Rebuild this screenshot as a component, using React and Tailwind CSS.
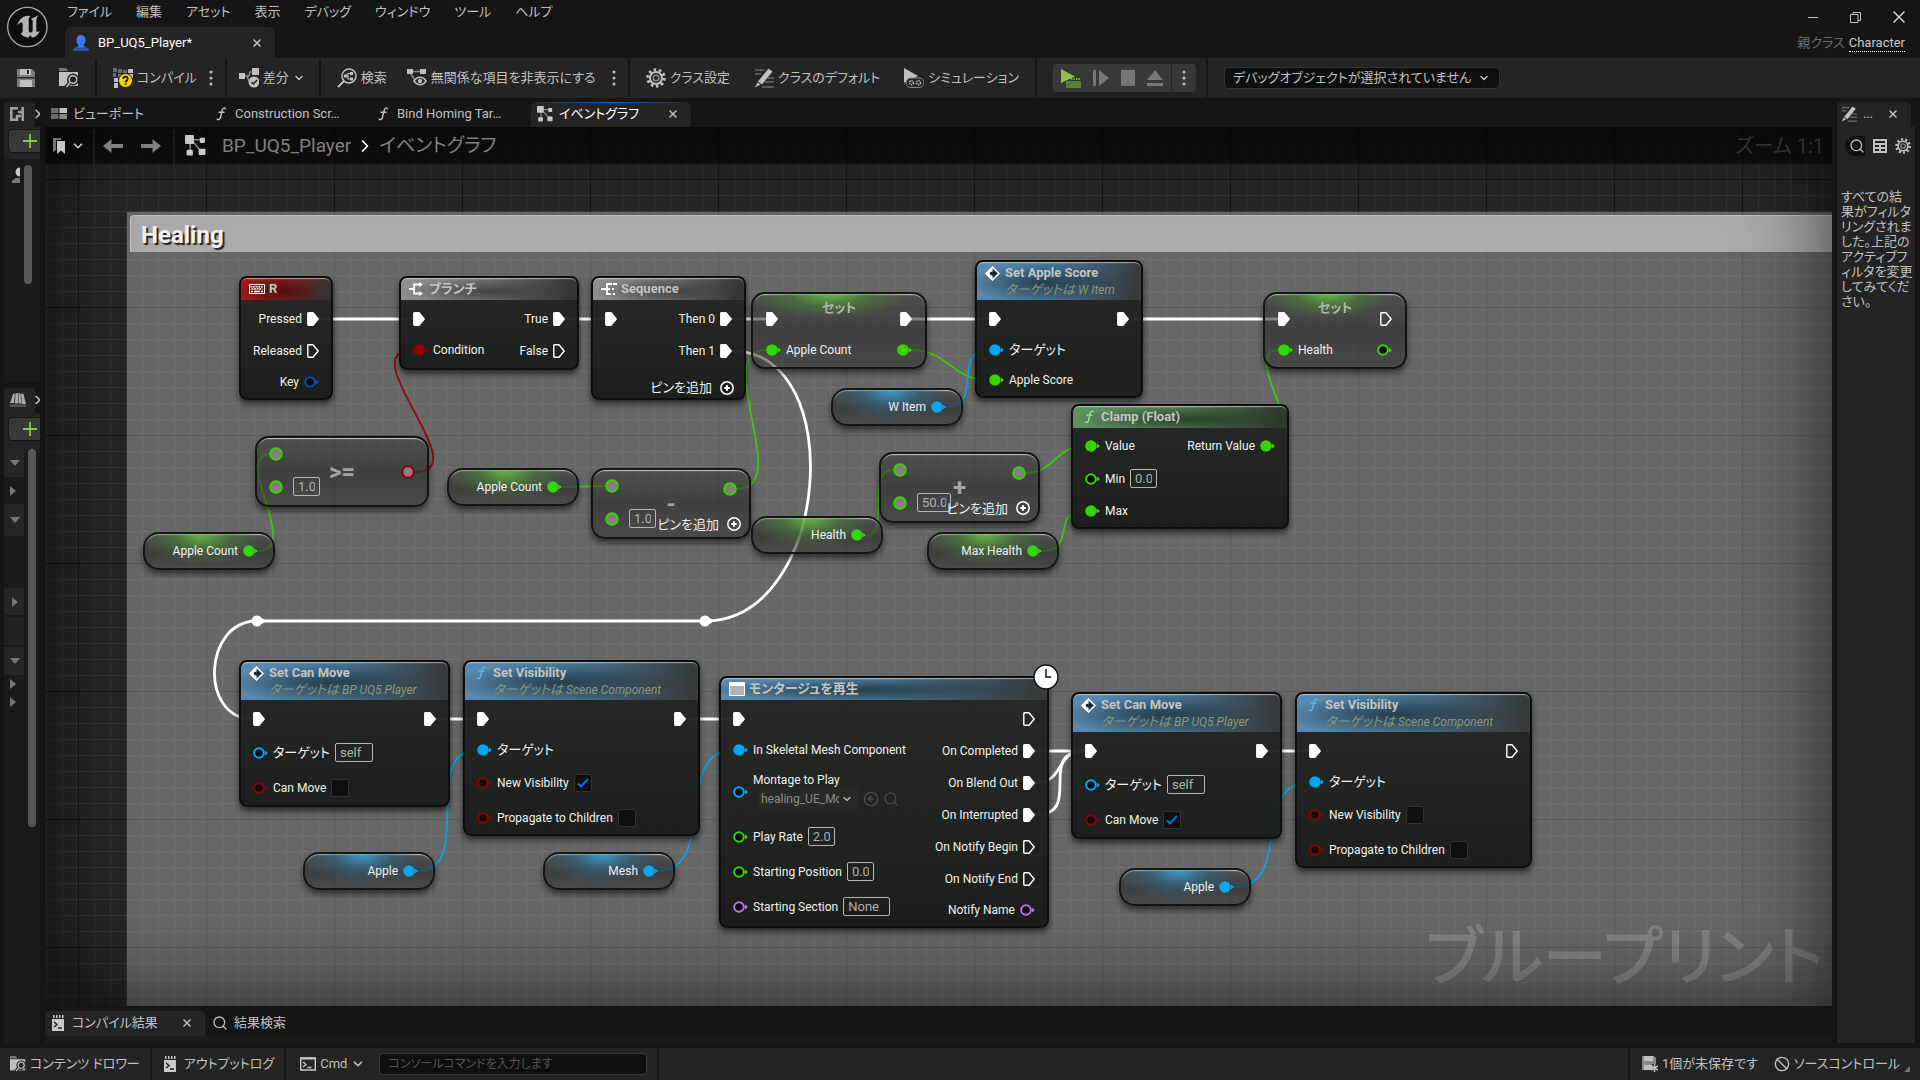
import React from 'react';
import { ChevronDown, ChevronRight, Search, X, CircleArrowLeft, Ban } from 'lucide-react';

const PIN_COLORS = {
  green: '#37d400',
  blue: '#00a8f5',
  red: '#930000',
  key: '#0b4fb3',
  purple: '#b877e8',
};

/* ---------- icons ---------- */

const UnrealLogo = () => (
  <svg className="size-[42px] shrink-0" viewBox="18 17 126 126" fill="none">
    <circle cx="82" cy="80" r="59" fill="#0e0e0e" stroke="#a8a8a8" strokeWidth="4" />
    <path
      fill="#b4b4b4"
      d="M70 50Q80 45 92 47Q86 50 86 58V90Q86 97 92 97Q97 96 98 91V62Q98 57 92 56Q104 52 115 45Q109 52 109 61V91Q110 98 120 91Q113 107 98 112L91 105L84 112Q68 110 62 99Q68 99 68 92V71Q68 66 63 66Q58 67 52 75Q56 57 70 50Z"
    />
  </svg>
);

const PersonIcon = () => (
  <svg className="size-4 shrink-0" viewBox="0 0 16 16">
    <path fill="#2f4f96" d="M0 16v-2l4-3h8l4 3v2z" />
    <path fill="#3d7bff" d="M8 0c3 0 4.500 2 4.500 5 0 2-1 4-2 5v2.500H5.500V10c-1-1-2-3-2-5C3.500 2 5 0 8 0z" />
    <path fill="#2a55b8" d="M5.500 5.500h2v1h-2zM8.500 5.500h2v1h-2zM7 8.500h2v1H7z" />
  </svg>
);

const SaveIcon = () => (
  <svg className="size-[18px]" viewBox="0 0 18 18" fill="#c0c0c0">
    <path fill="#7d7d7d" d="M0 0h15l3 3v15H0z" />
    <path d="M3 0h11v6H3zM3 11h12v7H3z" />
    <path fill="#242424" d="M10 1h2v4h-2zM0 8h18v1.500H0z" />
  </svg>
);

const BrowseIcon = ({ className = 'size-5' }) => (
  <svg className={className} viewBox="0 0 20 20" fill="none">
    <path fill="#777" d="M0 0h7l2 3H0z" />
    <path fill="#c0c0c0" d="M0 4h19v14H0z" />
    <circle cx="14" cy="11.500" r="4.500" fill="#242424" stroke="#242424" strokeWidth="3" />
    <circle cx="14" cy="11.500" r="3.800" stroke="#c0c0c0" strokeWidth="1.500" />
    <path stroke="#242424" strokeWidth="4" d="M11 14.500 7 19" />
    <path stroke="#c0c0c0" strokeWidth="1.500" d="M11.300 14.300 7.500 19" />
  </svg>
);

const CompileIcon = () => (
  <svg className="size-5" viewBox="0 0 20 20">
    <path fill="#6b6b6b" d="M0 0h4v4H0zM5 1h4v4H5zM10 2h4v4h-4zM0 5h3v4H0zM5 6h4v4H5z" />
    <path fill="#c0c0c0" d="M15 1h5v4h-5zM1 10h4v4H1zM1 15h4v5H1zM16 6h4v4h-4z" />
    <circle cx="12.500" cy="12.500" r="7" fill="#ffd500" stroke="#1c1c1c" />
    <path fill="none" stroke="#111" strokeWidth="1.800" d="M10.300 11c0-3 4.500-3 4.500-.2 0 1.700-2.200 1.700-2.200 3.700M12.600 15.500v1.600" />
  </svg>
);

const DiffIcon = () => (
  <svg className="size-5" viewBox="0 0 20 20" fill="#c0c0c0">
    <path d="M0 5h6v6H0zM13 0h7v7h-7z" />
    <path stroke="#888" strokeWidth="1.500" fill="none" d="M6 8h4l1-4h3M8 8l2 5" />
    <circle cx="15" cy="14" r="5.500" />
    <path stroke="#242424" strokeWidth="1.500" fill="none" d="m12.500 14 2 2 3.500-4" />
  </svg>
);

const FindIcon = () => (
  <svg className="size-5" viewBox="0 0 20 20" fill="none" stroke="#c0c0c0" strokeWidth="1.500">
    <circle cx="12" cy="8" r="7" />
    <path strokeWidth="2" d="M7 13 1 19" />
    <path strokeWidth="1.200" d="M8 8h3V5.500h4M11 8v3h4" />
    <path fill="#c0c0c0" stroke="none" d="M7 6.500h3v3H7zM13 4h3v3h-3zM13 9.500h3v3h-3z" />
  </svg>
);

const HideIcon = () => (
  <svg className="size-5" viewBox="0 0 20 20" fill="none" stroke="#c0c0c0">
    <path fill="#c0c0c0" stroke="none" d="M0 1h6v5H0zM13 1h6v5h-6z" />
    <path stroke="#888" strokeWidth="1.500" d="M6 3.500h7M4 6l4 6" />
    <path strokeWidth="1.500" d="M7 13c3.500-5 9-5 12 0-3 5-8.500 5-12 0z" />
    <circle cx="13" cy="13" r="1.800" fill="#c0c0c0" />
  </svg>
);

const GearIcon = ({ className = 'size-5' }) => (
  <svg className={className} viewBox="0 0 20 20" fill="none" stroke="#c0c0c0">
    <circle cx="10" cy="10" r="8.300" strokeWidth="3" strokeDasharray="2.600 2.615" />
    <circle cx="10" cy="10" r="6" strokeWidth="2" />
    <circle cx="10" cy="10" r="2.800" strokeWidth="1.500" stroke="#8a8a8a" />
  </svg>
);

const PencilIcon = ({ className = 'size-5' }) => (
  <svg className={className} viewBox="0 0 20 20" fill="none">
    <path stroke="#6b6b6b" strokeWidth="1.500" d="M1 2h9M1 6h6M14 10h6M11 14h9M8 19h12" />
    <path fill="#c0c0c0" d="m14.500.500 4 3L8 16.500l-4-3zM3.500 14.500l3 2L1 19.500z" />
  </svg>
);

const SimulateIcon = () => (
  <svg className="size-5" viewBox="0 0 20 20" fill="none">
    <path fill="#c0c0c0" d="M0 0 14 8 0 15z" />
    <rect x="2" y="10" width="18" height="9.500" rx="4.700" fill="#242424" stroke="#8a8a8a" />
    <circle cx="7.500" cy="14.700" r="2" stroke="#c0c0c0" strokeWidth="1.500" strokeDasharray="1.300 .8" />
    <circle cx="14.500" cy="14.700" r="2" stroke="#c0c0c0" strokeWidth="1.500" strokeDasharray="1.300 .8" />
  </svg>
);

const PlayIcon = () => (
  <svg className="size-5" viewBox="0 0 20 20">
    <path fill="#8bc34a" d="M0 1 14 8.500 0 15z" />
    <path fill="#5d7d3d" d="M5 13h15v7H5z" />
    <path fill="none" stroke="#8bc34a" strokeWidth="1.500" strokeDasharray="1.500 1" d="M10 11h10" />
  </svg>
);

const GraphIcon = ({ className = 'size-4' }) => (
  <svg className={className} viewBox="0 0 20 20" fill="#c8c8c8">
    <path stroke="#8a8a8a" strokeWidth="1.500" fill="none" d="M8 4.500h6M5 8v7M8 7l7 8" />
    <rect width="8.500" height="8.500" rx="1" />
    <rect x="14" y="2.500" width="5" height="5" rx="1" />
    <rect x="1.500" y="14" width="6" height="5.500" rx="1" />
    <rect x="13" y="13" width="6.500" height="6" rx="1" />
  </svg>
);

const ViewportIcon = () => (
  <svg className="h-[11px] w-4" viewBox="0 0 16 11">
    <path fill="#6b6b6b" d="M0 0h7.500v5H0zM0 6h7.500v5H0z" />
    <path fill="#c0c0c0" d="M8.500 0H16v5H8.500z" />
    <path fill="#8a8a8a" d="M8.500 6H16v5H8.500z" />
  </svg>
);

const FunctionIcon = ({ color = '#c0c0c0' }) => (
  <svg className="h-3.5 w-4" viewBox="0 0 16 14" fill="none" stroke={color} strokeWidth="1.400" strokeLinecap="round">
    <path d="M12.500 1.600C11 .4 9.600 1.200 9.100 3.500L7.600 10c-.5 2.300-1.800 3.200-3.400 2.200M6 5.300h5" />
  </svg>
);

const LogIcon = ({ className = 'h-4 w-3' }) => (
  <svg className={className} viewBox="0 0 12 16">
    <path fill="#c8c8c8" d="M0 4h12v12H0zM1 0h1.500v3H1zM4 0h1.500v3H4zM7 0h1.500v3H7zM10 0h1.500v3H10z" />
    <path fill="none" stroke="#222" strokeWidth="1.400" d="m2 7 3 2.500L2 12M6 13h4" />
  </svg>
);

const CmdIcon = () => (
  <svg className="size-4" viewBox="0 0 16 14" fill="none" stroke="#c8c8c8" strokeWidth="1.400">
    <path d="M.7 1h14.600v12H.7z" />
    <path strokeWidth="2" d="M.7 1.500h14.600" />
    <path d="m3 5 3 2.500L3 10M7.500 10.500h4" />
  </svg>
);

const Dots = () => (
  <svg className="h-4 w-1" viewBox="0 0 4 16" fill="#c0c0c0">
    <circle cx="2" cy="2" r="1.500" />
    <circle cx="2" cy="8" r="1.500" />
    <circle cx="2" cy="14" r="1.500" />
  </svg>
);

const ArrowIcon = ({ flip }) => (
  <svg className={`h-3.5 w-5 ${flip ? 'rotate-180' : ''}`} viewBox="0 0 20 14" fill="#808080">
    <path d="M0 7 8.500 0v5H20v4H8.500v5z" />
  </svg>
);

const BookmarkIcon = () => (
  <svg className="h-4 w-3" viewBox="0 0 12 16">
    <path fill="#777" d="M0 0h8v2H3v10l-3 2z" />
    <path fill="#c8c8c8" d="M4 3h8v13l-4-3.500L4 16z" />
  </svg>
);

const EventIcon = () => (
  <svg className="size-[15px]" viewBox="0 0 14 14">
    <path fill="none" stroke="#fff" strokeWidth="1.200" d="m7 .9 6.100 6.100L7 13.100.9 7z" />
    <path fill="#fff" d="M7 .2V4L4.500 7 7 10v3.800L.2 7z" />
    <path fill="#16202a" d="M4.500 5.800h3V3.500L11.500 7l-4 3.500V8.200h-3z" />
  </svg>
);

const KeyboardIcon = () => (
  <svg className="h-2.5 w-4" viewBox="0 0 16 10">
    <path fill="none" stroke="#fff" d="M.5.5h15v9H.5z" />
    <path stroke="#fff" strokeWidth="1.500" strokeDasharray="1.800 .8" d="M1.500 2.700h13M2.500 5h11" />
    <path stroke="#fff" strokeWidth="1.500" d="M2 7.400h2M5 7.400h6M12 7.400h2" />
  </svg>
);

const BranchIcon = () => (
  <svg className="size-3.5" viewBox="0 0 14 14" fill="none" stroke="#fff" strokeWidth="1.800">
    <path d="M0 7h5M11 2.500H5v9h6" />
    <path fill="#fff" stroke="none" d="m10 0 4 2.500L10 5zM10 9l4 2.500-4 2.500z" />
  </svg>
);

const SequenceIcon = () => (
  <svg className="h-3 w-4" viewBox="0 0 16 12" fill="none" stroke="#fff" strokeWidth="1.800">
    <path d="M0 6h9M11 1H6v10h4M12 1h4M11 6h2M12 11h2" />
  </svg>
);

const WindowIcon = () => (
  <svg className="h-3.5 w-4" viewBox="0 0 16 14">
    <path fill="#a9b4bb" stroke="#fff" d="M.5.500h15v13H.5z" />
    <path fill="#fff" d="M0 0h16v4H0z" />
  </svg>
);

const AddPinIcon = () => (
  <svg className="size-3.5" viewBox="0 0 14 14" fill="none" stroke="#fff" strokeWidth="1.500">
    <circle cx="7" cy="7" r="6.200" />
    <path strokeWidth="2" d="M7 4.200v5.600M4.200 7h5.600" />
  </svg>
);

/* ---------- pins ---------- */

const ExecPin = ({ filled = true }) => (
  <svg className="h-3.5 w-3 shrink-0" viewBox="0 0 12 14">
    <path
      d="M.8 1.500Q.8.800 1.500.800H6L11.200 7 6 13.200H1.500Q.8 13.200.8 12.500z"
      fill={filled ? '#fff' : 'none'}
      stroke="#fff"
      strokeWidth="1.400"
      strokeLinejoin="round"
    />
  </svg>
);

const DataPin = ({ color, filled }) => (
  <svg className="h-3.5 w-[15px] shrink-0" viewBox="0 0 15 14">
    <circle cx="6" cy="7" r="4.800" fill={filled ? PIN_COLORS[color] : '#0c0c0c'} stroke={PIN_COLORS[color]} strokeWidth="2" />
    <path fill={PIN_COLORS[color]} d="M12 4.500 15 7l-3 2.500z" />
  </svg>
);

const WildPin = ({ color = 'green' }) => (
  <svg className="size-3.5 shrink-0" viewBox="0 0 14 14">
    <circle cx="7" cy="7" r="5.800" fill="#857f82" stroke={PIN_COLORS[color]} strokeWidth="2" />
  </svg>
);

const ValueBox = ({ value, className = 'w-[27px]', label }) => (
  <input
    type="text"
    defaultValue={value}
    aria-label={label}
    className={`h-[19px] rounded-xs border border-[#b5b5b5] bg-transparent px-1 text-[13px] text-[#b0b0b0] outline-none ${className}`}
  />
);

const CheckBox = ({ checked }) => (
  <span className="relative size-[18px]">
    <input
      type="checkbox"
      defaultChecked={checked}
      className="peer block size-[18px] appearance-none rounded-xs border border-[#333] bg-[#0f0f0f]"
    />
    <svg className="pointer-events-none absolute inset-0 hidden size-[18px] peer-checked:block" viewBox="0 0 18 18" fill="none">
      <path stroke="#0070e0" strokeWidth="2.200" d="m4 9.500 3 3 7-7.500" />
    </svg>
  </span>
);

/* ---------- pin rows ---------- */

const TargetLabel = () => <span className="text-[13px]">ターゲット</span>;

const ExecIn = () => (
  <div className="flex h-8 items-center">
    <ExecPin />
  </div>
);

const ExecOut = ({ label, filled = true }) => (
  <div className="flex h-8 items-center justify-end gap-[5px]">
    {label}
    <ExecPin filled={filled} />
  </div>
);

const In = ({ label, color, filled }) => (
  <div className="flex h-[30px] items-center gap-[5px]">
    <DataPin color={color} filled={filled} />
    {label}
  </div>
);

const Out = ({ label, color, filled }) => (
  <div className="flex h-[30px] items-center justify-end gap-[5px]">
    {label}
    <DataPin color={color} filled={filled} />
  </div>
);

const InField = ({ label, color, children }) => (
  <label className="flex h-[35px] items-center gap-[5px]">
    <DataPin color={color} />
    {label}
    {children}
  </label>
);

/* ---------- nodes ---------- */

const HEADERS = {
  red: 'bg-[radial-gradient(ellipse_45%_60%_at_45%_60%,#3a0d0dcc,transparent),linear-gradient(100deg,#a01818_10%,#8c1a1a_45%,#333_95%)]',
  gray: 'bg-[radial-gradient(ellipse_50%_55%_at_50%_60%,#3a3a3acc,transparent),linear-gradient(100deg,#8e8e8e_5%,#6e6e6e_50%,#363636_95%)]',
  blue: 'bg-[radial-gradient(ellipse_50%_50%_at_42%_55%,#1d2f3dcc,transparent),linear-gradient(100deg,#5a8bae_5%,#46718f_50%,#383b3c_95%)]',
  green: 'bg-[radial-gradient(ellipse_50%_55%_at_50%_60%,#1f3320cc,transparent),linear-gradient(100deg,#5f9060_5%,#4f7a4f_50%,#2f3a2f_95%)]',
};

const GLOWS = {
  green: 'bg-[radial-gradient(ellipse_46%_90%_at_45%_0%,#6ec84ad9,#4a8a3480_50%,transparent)]',
  blue: 'bg-[radial-gradient(ellipse_46%_90%_at_45%_0%,#3fa9dcd9,#2a6f9380_50%,transparent)]',
};

const GLASS =
  'absolute overflow-hidden border-2 border-[#141414] bg-linear-to-b from-[#2a2a2a66] via-[#2a2a2aa8] to-[#2a2a2a80] shadow-[0_4px_6px_#0008,inset_0_2px_1px_-1px_#ffffffb0]';

const Node = ({ place, tone, icon, title, subtitle, left, right, children }) => (
  <section
    className={`absolute rounded-lg border-2 border-[#0d0d0d] bg-linear-to-b from-[#252724f5] to-[#1a1c19f5] shadow-[0_4px_6px_#0009] ${place}`}
  >
    <header
      className={`rounded-t-md px-2 shadow-[inset_0_2px_1px_-1px_#ffffff90] ${HEADERS[tone]} ${subtitle ? 'h-[38px]' : 'h-[22px]'}`}
    >
      <div className="flex h-[22px] items-center text-[13px] font-bold text-[#c4c4c4]">
        <span className="w-5 shrink-0">{icon}</span>
        <h3>{title}</h3>
      </div>
      {subtitle && (
        <p className="pl-5 leading-3 text-[#8d9878] italic">
          <span className="text-[13px]">ターゲットは</span> {subtitle}
        </p>
      )}
    </header>
    <div className="flex justify-between px-3 pt-[3px]">
      <div>{left}</div>
      <div>{right}</div>
    </div>
    {children}
  </section>
);

const VarNode = ({ place, label, color = 'green' }) => (
  <section className={`${GLASS} h-[38px] w-[132px] rounded-[16px] ${place}`}>
    <div className={`flex h-full items-center justify-end gap-[5px] pr-[15px] ${GLOWS[color]}`}>
      {label}
      <DataPin color={color} filled />
    </div>
  </section>
);

const SetNode = ({ place, label, linked }) => (
  <section className={`${GLASS} h-[77px] rounded-[14px] ${place}`}>
    <h3 className={`h-7 text-center text-[13px] leading-7 font-bold text-[#b4b4b4] ${GLOWS.green}`}>セット</h3>
    <div className="-mt-[19px] flex justify-between px-[13px]">
      <div>
        <ExecIn />
        <In label={label} color="green" filled />
      </div>
      <div>
        <ExecOut filled={linked} />
        <Out color="green" filled={linked} />
      </div>
    </div>
  </section>
);

const AddPin = () => (
  <button type="button" className="flex items-center gap-2 text-[13px]">
    ピンを追加
    <AddPinIcon />
  </button>
);

const MathNode = ({ place, operator, value, box, out = 'green', addPin }) => (
  <section className={`${GLASS} h-[71px] rounded-[14px] ${place}`}>
    <div className="flex justify-between pr-3 pl-3">
      <div>
        <div className="flex h-8 items-center">
          <WildPin />
        </div>
        <div className="flex h-[33px] items-center gap-2.5">
          <WildPin />
          <ValueBox value={value} className={box} label={operator} />
        </div>
      </div>
      <div className={`flex items-center ${addPin ? 'h-[38px]' : 'h-[68px]'}`}>
        <WildPin color={out} />
      </div>
    </div>
    <div className="pointer-events-none absolute inset-0 flex items-center justify-center text-2xl font-bold text-[#a4a4a4]">
      {operator}
    </div>
    {addPin && (
      <div className="absolute right-2 bottom-1">
        <AddPin />
      </div>
    )}
  </section>
);

const SetCanMove = ({ place, checked }) => (
  <Node
    place={`h-[147px] w-[211px] ${place}`}
    tone="blue"
    icon={<EventIcon />}
    title="Set Can Move"
    subtitle="BP UQ5 Player"
    left={
      <>
        <ExecIn />
        <InField label={<TargetLabel />} color="blue">
          <ValueBox value="self" className="w-[38px]" />
        </InField>
        <InField label="Can Move" color="red">
          <CheckBox checked={checked} />
        </InField>
      </>
    }
    right={<ExecOut />}
  />
);

const SetVisibility = ({ place, checked, linked }) => (
  <Node
    place={`h-[176px] w-[237px] ${place}`}
    tone="blue"
    icon={<FunctionIcon color="#5fb4f0" />}
    title="Set Visibility"
    subtitle="Scene Component"
    left={
      <>
        <ExecIn />
        <In label={<TargetLabel />} color="blue" filled />
        <InField label="New Visibility" color="red">
          <CheckBox checked={checked} />
        </InField>
        <InField label="Propagate to Children" color="red">
          <CheckBox />
        </InField>
      </>
    }
    right={<ExecOut filled={linked} />}
  />
);

const PlayMontage = () => (
  <Node
    place="left-[674px] top-[549px] h-[252px] w-[330px]"
    tone="blue"
    icon={<WindowIcon />}
    title="モンタージュを再生"
    left={
      <>
        <ExecIn />
        <In label="In Skeletal Mesh Component" color="blue" filled />
        <div className="flex h-[54px] items-center gap-[5px]">
          <DataPin color="blue" />
          <div>
            <label htmlFor="montage" className="block leading-3.5">
              Montage to Play
            </label>
            <div className="flex items-center gap-1 pl-1.5 text-[#4a4a4a]">
              <span className="relative">
                <select
                  id="montage"
                  className="block h-6 w-[100px] appearance-none rounded-sm bg-[#272927] pr-5 pl-0.5 text-xs text-[#8c8c8c]"
                >
                  <option>healing_UE_Montage</option>
                </select>
                <ChevronDown className="pointer-events-none absolute top-1.5 right-1.5 size-3 text-[#b0b0b0]" strokeWidth={3} />
              </span>
              <CircleArrowLeft className="size-4" />
              <Search className="size-4" />
            </div>
          </div>
        </div>
        <InField label="Play Rate" color="green">
          <ValueBox value="2.0" />
        </InField>
        <InField label="Starting Position" color="green">
          <ValueBox value="0.0" />
        </InField>
        <InField label="Starting Section" color="purple">
          <ValueBox value="None" className="w-[47px]" />
        </InField>
      </>
    }
    right={
      <>
        <ExecOut filled={false} />
        <ExecOut label="On Completed" />
        <ExecOut label="On Blend Out" />
        <ExecOut label="On Interrupted" />
        <ExecOut label="On Notify Begin" filled={false} />
        <ExecOut label="On Notify End" filled={false} />
        <Out label="Notify Name" color="purple" />
      </>
    }
  >
    <svg className="absolute -top-3.5 -right-3 size-[26px]" viewBox="0 0 26 26">
      <circle cx="13" cy="13" r="12" fill="#fff" stroke="#111" strokeWidth="1.500" />
      <path fill="none" stroke="#111" strokeWidth="1.500" d="M13 5v8h5" />
    </svg>
  </Node>
);

const EXEC_WIRES = [
  'M273 192H368',
  'M520 192H560',
  'M686 192H722',
  'M866 192H944',
  'M1083 192H1234',
  'M687 224C805 224 785 494 660 494',
  'M212 494H660',
  'M212 494C158 494 154 592 208 592',
  'M390 592H432',
  'M640 592H688',
  'M990 624H1040',
  'M990 656C1020 656 1010 624 1040 624',
  'M990 688C1040 688 990 624 1040 624',
  'M1223 624H1264',
];

const DATA_WIRES = [
  ['green', 'M213 424C258 424 185 327 226 327'],
  ['red', 'M370 345C434 345 304 223 368 223'],
  ['green', 'M517 360L560 359'],
  ['green', 'M692 362C750 362 664 223 722 223'],
  ['green', 'M865 223C905 223 905 253 944 253'],
  ['blue', 'M901 280C940 280 905 223 944 223'],
  ['green', 'M980 346C1010 346 1010 319 1040 319'],
  ['green', 'M821 409C846 409 820 343 848 343'],
  ['green', 'M997 424C1032 424 1005 384 1040 384'],
  ['green', 'M1229 319C1271 319 1192 223 1234 223'],
  ['blue', 'M373 744C430 744 375 623 432 623'],
  ['blue', 'M613 744C673 744 628 623 688 623'],
  ['blue', 'M1189 760C1249 760 1205 655 1265 655'],
];

const Wires = () => (
  <svg className="absolute inset-0 size-full" fill="none">
    {DATA_WIRES.map(([color, d]) => (
      <path key={d} d={d} stroke={PIN_COLORS[color]} strokeWidth="1.800" opacity=".9" />
    ))}
    {EXEC_WIRES.map((d) => (
      <path key={d} d={d} stroke="#fff" strokeWidth="2.800" />
    ))}
    <g fill="#fff">
      <circle cx="212" cy="494" r="5.500" />
      <circle cx="660" cy="494" r="5.500" />
      <path d="M217 491l4 3-4 3zM665 491l4 3-4 3z" />
    </g>
  </svg>
);

const Canvas = () => (
  <div className="absolute inset-0 overflow-hidden bg-[#262626] text-xs text-[#f0f0f0]">
    {/* 16px grid with a dark line every 128px */}
    <div className="absolute inset-0 bg-[linear-gradient(#151515_1px,transparent_1px),linear-gradient(90deg,#151515_1px,transparent_1px),linear-gradient(#343434_1px,transparent_1px),linear-gradient(90deg,#343434_1px,transparent_1px)] bg-[size:128px_128px,128px_128px,16px_16px,16px_16px] bg-[position:33px_52px,33px_52px,1px_4px,1px_4px]" />

    {/* comment box */}
    <section className="absolute top-[85px] right-0 bottom-0 left-[82px] bg-white/30 pt-[3px] pl-[3px]">
      <h2 className="h-[37px] rounded-tl-sm border-t border-l border-[#c4c4c4] bg-[#ababab] pl-2.5 text-2xl leading-[38px] font-bold text-[#f0f0f0] [text-shadow:2px_2px_1px_#222]">
        Healing
      </h2>
    </section>

    <p className="absolute right-2 bottom-1.5 text-[65px] leading-[84px] font-medium text-white/18">ブループリント</p>

    <Wires />

    <Node
      place="left-[194px] top-[149px] h-[124px] w-[94px]"
      tone="red"
      icon={<KeyboardIcon />}
      title="R"
      right={
        <>
          <ExecOut label="Pressed" />
          <ExecOut label="Released" filled={false} />
          <Out label="Key" color="key" />
        </>
      }
    />
    <Node
      place="left-[354px] top-[149px] h-[94px] w-[180px]"
      tone="gray"
      icon={<BranchIcon />}
      title="ブランチ"
      left={
        <>
          <ExecIn />
          <In label="Condition" color="red" filled />
        </>
      }
      right={
        <>
          <ExecOut label="True" />
          <ExecOut label="False" filled={false} />
        </>
      }
    />
    <Node
      place="left-[546px] top-[149px] h-[124px] w-[155px]"
      tone="gray"
      icon={<SequenceIcon />}
      title="Sequence"
      left={<ExecIn />}
      right={
        <>
          <ExecOut label="Then 0" />
          <ExecOut label="Then 1" />
        </>
      }
    >
      <div className="flex justify-end pt-3 pr-2.5">
        <AddPin />
      </div>
    </Node>
    <SetNode place="left-[706px] top-[165px] w-[176px]" label="Apple Count" linked />
    <Node
      place="left-[930px] top-[133px] h-[138px] w-[168px]"
      tone="blue"
      icon={<EventIcon />}
      title="Set Apple Score"
      subtitle="W Item"
      left={
        <>
          <ExecIn />
          <In label={<TargetLabel />} color="blue" filled />
          <In label="Apple Score" color="green" filled />
        </>
      }
      right={<ExecOut />}
    />
    <SetNode place="left-[1218px] top-[165px] w-[144px]" label="Health" linked={false} />

    <MathNode place="left-[210px] top-[309px] w-[174px]" operator=">=" value="1.0" box="w-[27px]" out="red" />
    <VarNode place="left-[98px] top-[405px]" label="Apple Count" />
    <VarNode place="left-[402px] top-[341px]" label="Apple Count" />
    <MathNode place="left-[546px] top-[341px] w-[160px]" operator="-" value="1.0" box="w-[27px]" addPin />
    <VarNode place="left-[786px] top-[261px]" label="W Item" color="blue" />
    <MathNode place="left-[834px] top-[325px] w-[161px]" operator="+" value="50.0" box="w-[34px]" addPin />
    <VarNode place="left-[706px] top-[389px]" label="Health" />
    <VarNode place="left-[882px] top-[405px]" label="Max Health" />
    <Node
      place="left-[1026px] top-[277px] h-[125px] w-[218px]"
      tone="green"
      icon={<FunctionIcon color="#8fe08f" />}
      title="Clamp (Float)"
      left={
        <>
          <In label="Value" color="green" filled />
          <InField label="Min" color="green">
            <ValueBox value="0.0" />
          </InField>
          <In label="Max" color="green" filled />
        </>
      }
      right={<Out label="Return Value" color="green" filled />}
    />

    <SetCanMove place="left-[194px] top-[533px]" />
    <SetVisibility place="left-[418px] top-[533px]" checked linked />
    <VarNode place="left-[258px] top-[725px]" label="Apple" color="blue" />
    <VarNode place="left-[498px] top-[725px]" label="Mesh" color="blue" />
    <PlayMontage />
    <SetCanMove place="left-[1026px] top-[565px]" checked />
    <SetVisibility place="left-[1250px] top-[565px]" linked={false} />
    <VarNode place="left-[1074px] top-[741px]" label="Apple" color="blue" />

    <div className="pointer-events-none absolute inset-0 shadow-[inset_0_0_90px_#000000b0]" />
  </div>
);

/* ---------- editor chrome ---------- */

const MENUS = ['ファイル', '編集', 'アセット', '表示', 'デバッグ', 'ウィンドウ', 'ツール', 'ヘルプ'];

const TitleBar = () => (
  <header className="flex h-[58px] justify-between pl-1.5">
    <div className="flex gap-[17px]">
      <div className="pt-1.5">
        <UnrealLogo />
      </div>
      <div className="flex flex-col justify-between">
        <nav className="flex h-6 items-center gap-6 pl-0.5">
          {MENUS.map((menu) => (
            <button key={menu} type="button">
              {menu}
            </button>
          ))}
        </nav>
        <div className="flex h-[31px] w-[210px] items-center gap-[9px] rounded-t-md bg-[#242424] pr-3 pl-2 text-white">
          <PersonIcon />
          <span className="flex-1">BP_UQ5_Player*</span>
          <button type="button" aria-label="閉じる">
            <X className="size-3 text-[#c0c0c0]" strokeWidth={3} />
          </button>
        </div>
      </div>
    </div>
    <div className="flex flex-col items-end justify-between pr-[15px] pb-1.5">
      <div className="flex h-[34px] items-center gap-8">
        <button type="button" aria-label="最小化" className="h-px w-2.5 bg-[#c0c0c0]" />
        <button type="button" aria-label="元に戻す">
          <svg className="size-[11px]" viewBox="0 0 11 11" fill="none" stroke="#c0c0c0">
            <path d="M.5 2.500h7.500v8H.5zM3 2.500v-2h7.500v8H8" />
          </svg>
        </button>
        <button type="button" aria-label="ウィンドウを閉じる">
          <svg className="size-3" viewBox="0 0 12 12" stroke="#d0d0d0" strokeWidth="1.500">
            <path d="m.5.500 11 11m0-11-11 11" />
          </svg>
        </button>
      </div>
      <p className="flex items-baseline gap-1 leading-4 text-[#6f6f6f]">
        親クラス
        <a href="#character" className="border-b border-dotted border-white text-[#c8c8c8]">
          Character
        </a>
      </p>
    </div>
  </header>
);

const ToolGroup = ({ className = '', children }) => (
  <div className={`flex items-center border-r-2 border-[#151515] ${className}`}>{children}</div>
);

const ToolButton = ({ icon, children }) => (
  <button type="button" className="flex items-center gap-1">
    {icon}
    {children}
  </button>
);

const Toolbar = () => (
  <div className="flex h-10 bg-[#242424] py-px whitespace-nowrap">
    <ToolGroup className="gap-6 pr-4 pl-[17px]">
      <button type="button" aria-label="保存"><SaveIcon /></button>
      <button type="button" aria-label="参照"><BrowseIcon /></button>
    </ToolGroup>
    <ToolGroup className="gap-3 pr-3 pl-4">
      <ToolButton icon={<CompileIcon />}>コンパイル</ToolButton>
      <button type="button" aria-label="コンパイル設定"><Dots /></button>
    </ToolGroup>
    <ToolGroup className="pr-3.5 pl-3">
      <ToolButton icon={<DiffIcon />}>
        差分
        <ChevronDown className="size-3" strokeWidth={3} />
      </ToolButton>
    </ToolGroup>
    <ToolGroup className="gap-5 pr-3 pl-4">
      <ToolButton icon={<FindIcon />}>検索</ToolButton>
      <div className="flex items-center gap-4">
        <ToolButton icon={<HideIcon />}>無関係な項目を非表示にする</ToolButton>
        <button type="button" aria-label="表示設定"><Dots /></button>
      </div>
    </ToolGroup>
    <ToolGroup className="gap-6 pr-4 pl-4">
      <ToolButton icon={<GearIcon />}>クラス設定</ToolButton>
      <ToolButton icon={<PencilIcon />}>クラスのデフォルト</ToolButton>
      <ToolButton icon={<SimulateIcon />}>シミュレーション</ToolButton>
    </ToolGroup>
    <ToolGroup className="pr-2.5 pl-4">
      <div className="flex h-7 items-center gap-2 rounded bg-[#383838] pr-2.5 pl-2">
        <div className="flex items-center gap-3">
          <button type="button" aria-label="プレイ"><PlayIcon /></button>
          <button type="button" aria-label="ステップ">
            <svg className="size-4" viewBox="0 0 16 16" fill="#777"><path d="M0 0h3v16H0zM6 0l10 8L6 16z" /></svg>
          </button>
          <button type="button" aria-label="停止" className="h-4 w-3.5 bg-[#777]" />
          <button type="button" aria-label="イジェクト">
            <svg className="size-4" viewBox="0 0 16 16" fill="#777"><path d="m8 0 8 10H0zM0 13h16v3H0z" /></svg>
          </button>
        </div>
        <div className="flex h-7 items-center border-l border-[#242424] pl-2.5">
          <button type="button" aria-label="プレイ設定"><Dots /></button>
        </div>
      </div>
    </ToolGroup>
    <div className="flex items-center pl-4">
      <span className="relative">
        <select
          aria-label="デバッグオブジェクト"
          className="block h-[22px] w-[276px] appearance-none rounded border border-[#333] bg-[#0f0f0f] pr-6 pl-2 leading-5"
        >
          <option>デバッグオブジェクトが選択されていません</option>
        </select>
        <ChevronDown className="pointer-events-none absolute top-[5px] right-2.5 size-3" strokeWidth={3} />
      </span>
    </div>
  </div>
);

const PanelTab = ({ children }) => (
  <div className="flex h-[25px] items-center pb-0.5">
    <div className="-mb-0.5 flex h-[25px] w-[31px] shrink-0 items-center rounded-t bg-[#242424] pb-0.5 pl-1.5">
      {children}
    </div>
    <ChevronRight className="-ml-1 size-3.5 shrink-0" strokeWidth={3} />
  </div>
);

const AddButton = ({ label }) => (
  <button
    type="button"
    aria-label={label}
    className="ml-1 flex h-6 w-11 items-center rounded border border-[#141414] bg-[#383838] pl-3.5"
  >
    <svg className="size-3.5" viewBox="0 0 14 14" stroke="#8bc34a" strokeWidth="1.800">
      <path d="M7 0v14M0 7h14" />
    </svg>
  </button>
);

const Triangle = ({ open }) => (
  <svg className={`size-2.5 ${open ? 'rotate-90' : ''}`} viewBox="0 0 10 10" fill="#777">
    <path d="M2 0l6 5-6 5z" />
  </svg>
);

const LeftPanels = () => (
  <aside className="mr-[5px] ml-1 flex w-9 shrink-0 flex-col overflow-hidden pt-1">
    <div className="h-[280px] shrink-0 bg-[#1a1a1a]">
      <div className="bg-[#151515]">
        <PanelTab>
          <svg className="size-3.5" viewBox="0 0 14 14" fill="none" stroke="#a0a0a0" strokeWidth="2.500">
            <path d="M8 1.300H1.300v11.400H7V9h4M12.700 0v14M8 5h3.500" />
          </svg>
        </PanelTab>
      </div>
      <div className="h-8 bg-[#242424] pt-0.5">
        <AddButton label="追加" />
      </div>
      <div className="flex pt-1.5 pl-2">
        <div className="mt-0.5 h-4 w-2 overflow-hidden">
          <svg className="size-4" viewBox="0 0 16 16">
            <path fill="#777" d="M0 16v-2l4-3h8l4 3v2z" />
            <circle cx="8" cy="5" r="4.500" fill="#c8c8c8" />
          </svg>
        </div>
        <div className="ml-1 h-[119px] w-2 rounded-full bg-[#575757]" />
      </div>
    </div>
    <div className="mt-1.5 flex-1 bg-[#1a1a1a]">
      <div className="bg-[#151515]">
        <PanelTab>
          <svg className="h-3.5 w-4" viewBox="0 0 16 14" fill="#a8a8a8">
            <path d="M3 1l2-.500L4 10H0zM5.500.500 8 0v10.500H4.800zM8.500 0l2 .5 1 10h-3zM11 .5l2.500.5L16 11h-4z" />
            <path fill="#555" d="M0 11.500h16V14H0z" />
          </svg>
        </PanelTab>
      </div>
      <div className="h-9 bg-[#242424] pt-1">
        <AddButton label="新規追加" />
      </div>
      <div className="flex">
        <ul className="w-5 [&>li]:flex [&>li]:items-center">
          <li className="h-7 bg-[#262626] pl-1.5"><Triangle open /></li>
          <li className="h-[27px] pl-1"><Triangle /></li>
          <li className="h-8 bg-[#262626] pl-1.5"><Triangle open /></li>
          <li className="h-[52px]" />
          <li className="h-[27px] bg-[#262626] pl-1.5"><Triangle /></li>
          <li className="mt-0.5 h-7 bg-[#222]" />
          <li className="mt-0.5 h-7 bg-[#262626] pl-1.5"><Triangle open /></li>
          <li className="h-[18px] pl-1"><Triangle /></li>
          <li className="h-[18px] pl-1"><Triangle /></li>
        </ul>
        <div className="ml-1 h-[378px] w-2 rounded-full bg-[#575757]" />
      </div>
    </div>
  </aside>
);

const GraphTab = ({ icon, children }) => (
  <button type="button" className="flex h-[25px] w-[162px] items-center gap-1.5 pb-0.5 pl-1.5">
    {icon}
    {children}
  </button>
);

const GraphArea = () => (
  <main className="flex min-w-0 flex-1 flex-col">
    <div className="flex pt-1">
      <GraphTab icon={<ViewportIcon />}>ビューポート</GraphTab>
      <GraphTab icon={<FunctionIcon />}>Construction Scr…</GraphTab>
      <GraphTab icon={<FunctionIcon />}>Bind Homing Tar…</GraphTab>
      <div className="relative flex h-[25px] w-40 items-center gap-1.5 rounded-t-md bg-[#242424] pr-3 pb-0.5 pl-1.5 text-white">
        <div className="absolute inset-x-0 top-0 h-px bg-linear-to-r from-transparent via-[#0070e0] to-transparent" />
        <GraphIcon />
        <span className="flex-1">イベントグラフ</span>
        <button type="button" aria-label="タブを閉じる">
          <X className="size-3 text-[#c0c0c0]" strokeWidth={3} />
        </button>
      </div>
    </div>
    <div className="relative flex-1">
      <Canvas />
      <div className="relative flex h-[37px] items-center justify-between bg-black/60 pr-2 text-[19px] text-[#808080]">
        <div className="flex h-full items-center">
          <button type="button" aria-label="ブックマーク" className="flex items-center gap-1.5 px-2">
            <BookmarkIcon />
            <ChevronDown className="size-3.5 text-[#c8c8c8]" strokeWidth={3} />
          </button>
          <div className="h-[34px] w-0.5 bg-[#1c1c1c]" />
          <div className="flex gap-[18px] pr-3 pl-2">
            <button type="button" aria-label="戻る"><ArrowIcon /></button>
            <button type="button" aria-label="進む"><ArrowIcon flip /></button>
          </div>
          <div className="h-[34px] w-0.5 bg-[#1c1c1c]" />
          <div className="flex items-center gap-4 pl-2.5">
            <GraphIcon className="size-[21px]" />
            <div className="flex items-center gap-1">
              BP_UQ5_Player
              <ChevronRight className="size-5 text-white" />
              イベントグラフ
            </div>
          </div>
        </div>
        <p className="text-xl text-[#333]">ズーム 1:1</p>
      </div>
    </div>
    <div className="flex pt-[5px]">
      <div className="flex h-[25px] w-40 items-center gap-2 rounded-t bg-[#242424] pr-3 pb-0.5 pl-[7px]">
        <LogIcon />
        <span className="flex-1">コンパイル結果</span>
        <button type="button" aria-label="結果を閉じる">
          <X className="size-3" strokeWidth={3} />
        </button>
      </div>
      <button type="button" className="flex items-center gap-1.5 pb-0.5 pl-[7px]">
        <Search className="size-4" />
        結果検索
      </button>
    </div>
    <div className="h-[7px] bg-[#1a1a1a]" />
  </main>
);

const FILTER_LINES = ['すべての結', '果がフィルタ', 'リングされま', 'した。上記の', 'アクティブフ', 'ィルタを変更', 'してみてくだ', 'さい。'];

const DetailsPanel = () => (
  <aside className="mr-[5px] ml-[5px] flex w-[78px] shrink-0 flex-col pt-1">
    <div className="flex h-[25px] w-[74px] items-center gap-1.5 rounded-t bg-[#242424] px-1 pb-0.5">
      <PencilIcon className="size-4" />
      <span className="flex-1">...</span>
      <button type="button" aria-label="詳細を閉じる" className="pr-2">
        <X className="size-3" strokeWidth={3} />
      </button>
    </div>
    <div className="flex-1 bg-[#242424]">
      <div className="flex h-[38px] items-center gap-2 pl-2">
        <div className="rounded-l-full bg-[#0f0f0f] py-0.5 pl-1">
          <Search className="size-4" />
        </div>
        <svg className="size-3.5" viewBox="0 0 14 14" fill="none" stroke="#c0c0c0" strokeWidth="2">
          <path d="M1 1h12v12H1zM1 5h12M1 9h12M7 5v8" />
        </svg>
        <GearIcon className="size-4" />
      </div>
      <p className="pt-6 pl-1 leading-[15px]">
        {FILTER_LINES.map((line) => (
          <span key={line} className="block whitespace-nowrap">
            {line}
          </span>
        ))}
      </p>
    </div>
  </aside>
);

const StatusBar = () => (
  <footer className="mt-[5px] flex h-8 items-stretch bg-[#242424] whitespace-nowrap">
    <ToolGroup className="pr-2.5 pl-2.5">
      <ToolButton icon={<BrowseIcon className="size-4" />}>コンテンツ ドロワー</ToolButton>
    </ToolGroup>
    <ToolGroup className="pr-2.5 pl-3">
      <ToolButton icon={<LogIcon className="mr-1 h-4 w-3" />}>アウトプットログ</ToolButton>
    </ToolGroup>
    <ToolGroup className="gap-3.5 pr-2.5 pl-3.5">
      <ToolButton icon={<CmdIcon />}>
        Cmd
        <ChevronDown className="size-3.5" strokeWidth={3} />
      </ToolButton>
      <input
        type="text"
        aria-label="コンソールコマンド"
        placeholder="コンソールコマンドを入力します"
        className="h-[22px] w-[268px] rounded border border-[#3a3a3a] bg-[#0f0f0f] px-2 text-xs placeholder:text-[#555]"
      />
    </ToolGroup>
    <div className="flex-1" />
    <div className="flex items-center gap-4 border-l-2 border-[#151515] pr-2.5 pl-3">
      <ToolButton
        icon={
          <svg className="size-4" viewBox="0 0 16 16" fill="#c0c0c0">
            <path fill="#888" d="M0 0h12l2 2v12H0z" />
            <path d="M2 0h9v5H2zM2 9h8v5H2z" />
            <path stroke="#242424" strokeWidth="5" d="M12.500 8v8" />
            <path stroke="#c0c0c0" strokeWidth="1.500" d="M12.500 8v8M9 10l7 4M16 10l-7 4" />
          </svg>
        }
      >
        1個が未保存です
      </ToolButton>
      <ToolButton icon={<Ban className="size-4" />}>
        ソースコントロール
        <svg className="size-1.5 self-end" viewBox="0 0 6 6" fill="#777"><path d="M6 0v6H0z" /></svg>
      </ToolButton>
    </div>
  </footer>
);

export default function App() {
  return (
    <div className="flex min-h-screen flex-col bg-[#151515] [font-family:Roboto,'Noto_Sans_CJK_JP',sans-serif] text-[13px] leading-4 text-[#c0c0c0] [font-feature-settings:'palt']">
      <TitleBar />
      <Toolbar />
      <div className="flex flex-1">
        <LeftPanels />
        <GraphArea />
        <DetailsPanel />
      </div>
      <StatusBar />
    </div>
  );
}
